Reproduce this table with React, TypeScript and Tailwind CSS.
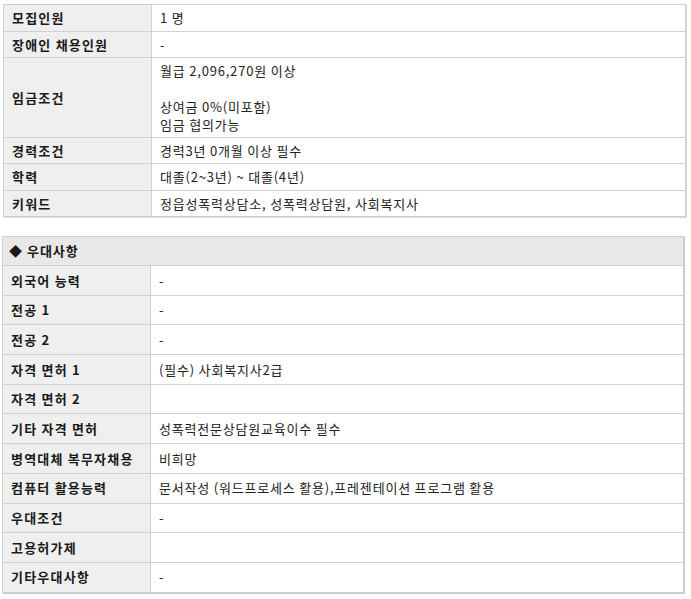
import React from 'react';

type Row = { label: string; value?: React.ReactNode; h?: string };

const basicRows: Row[] = [
  { label: '모집인원', value: '1 명', h: 'h-[27px]' },
  { label: '장애인 채용인원', value: '-', h: 'h-[26px]' },
  {
    label: '임금조건',
    value: (
      <div className="leading-[18px] py-[3px]">
        <div>월급 2,096,270원 이상</div>
        <div>&nbsp;</div>
        <div>상여금 0%(미포함)</div>
        <div>임금 협의가능</div>
      </div>
    ),
    h: 'h-[80px]',
  },
  { label: '경력조건', value: '경력3년 0개월 이상 필수', h: 'h-[26px]' },
  { label: '학력', value: '대졸(2~3년) ~ 대졸(4년)', h: 'h-[27px]' },
  { label: '키워드', value: '정읍성폭력상담소, 성폭력상담원, 사회복지사', h: 'h-[26px]' },
];

const prefRows: Row[] = [
  { label: '외국어 능력', value: '-' },
  { label: '전공 1', value: '-' },
  { label: '전공 2', value: '-' },
  { label: '자격 면허 1', value: '(필수) 사회복지사2급' },
  { label: '자격 면허 2', value: '' },
  { label: '기타 자격 면허', value: '성폭력전문상담원교육이수 필수' },
  { label: '병역대체 복무자채용', value: '비희망' },
  { label: '컴퓨터 활용능력', value: '문서작성 (워드프로세스 활용),프레젠테이션 프로그램 활용' },
  { label: '우대조건', value: '-' },
  { label: '고용허가제', value: '' },
  { label: '기타우대사항', value: '-' },
];

const InfoRow: React.FC<{ row: Row; h: string }> = ({ row, h }) => (
  <tr className={h}>
    <th className="w-[148px] bg-[#efefef] border border-[#cfcfcf] pl-[8px] text-left font-bold text-[#1a1a1a] tracking-[1.2px] align-middle whitespace-nowrap">
      {row.label}
    </th>
    <td className="border border-[#cfcfcf] pl-[8px] text-[#222] tracking-[0.8px] align-middle">{row.value}</td>
  </tr>
);

export default function App() {
  return (
    <div
      className="w-[691px] h-[599px] bg-white pt-[4px] pl-[3px] text-[13px] overflow-hidden"
      style={{ fontFamily: '"Noto Sans CJK KR", "Noto Sans", sans-serif' }}
    >
      <table className="w-[683px] border-collapse shadow-[1px_1px_0_#dcdcdc]">
        <tbody>
          {basicRows.map((r) => (
            <InfoRow key={r.label} row={r} h={r.h ?? 'h-[26px]'} />
          ))}
        </tbody>
      </table>

      <table className="mt-[19px] -ml-[1px] w-[682px] border-collapse shadow-[1px_1px_0_#c8c8c8]">
        <tbody>
          <tr className="h-[29px]">
            <th
              colSpan={2}
              className="bg-[#e8e8e8] border border-[#cfcfcf] pl-[6px] text-left font-bold text-[#1a1a1a] tracking-[1px] align-middle"
            >
              ◆ 우대사항
            </th>
          </tr>
          {prefRows.map((r) => (
            <InfoRow key={r.label} row={r} h="h-[29.7px]" />
          ))}
        </tbody>
      </table>
    </div>
  );
}
